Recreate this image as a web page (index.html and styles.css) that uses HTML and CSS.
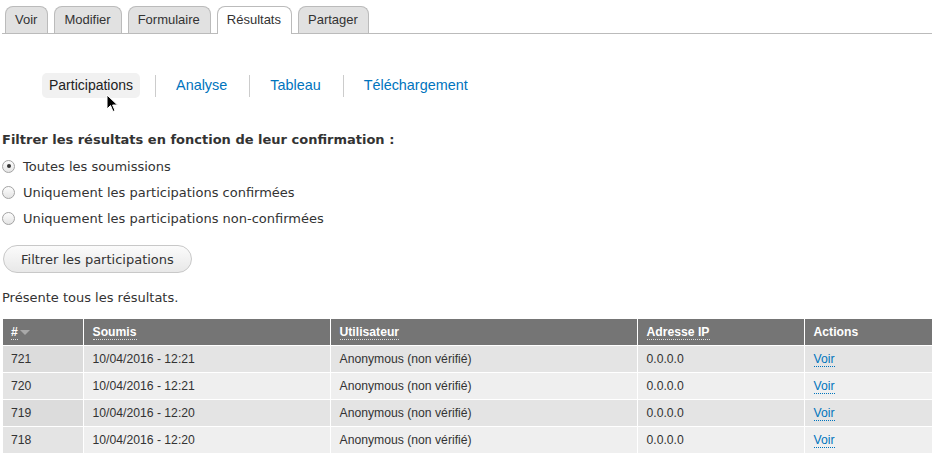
FILE: index.html
```html
<!DOCTYPE html>
<html lang="fr">
<head>
    <meta charset="UTF-8">
    <title>Résultats</title>
    <link rel="stylesheet" href="styles.css">
</head>
<body>
    <div class="page">
        <ul class="tabs">
            <li><a href="#">Voir</a></li>
            <li><a href="#">Modifier</a></li>
            <li><a href="#">Formulaire</a></li>
            <li class="active"><a href="#">Résultats</a></li>
            <li><a href="#">Partager</a></li>
        </ul>

        <ul class="subtabs">
            <li class="active">
                <a href="#">Participations</a>
                <svg class="cursor" width="13" height="20" viewBox="0 0 13 20">
                    <path d="M1 1 L1 15 L4.5 11.5 L7 17.5 L9 16.6 L6.6 11 L11.5 11 Z" fill="#000" stroke="#fff" stroke-width="1"/>
                </svg>
            </li>
            <li><a href="#">Analyse</a></li>
            <li><a href="#">Tableau</a></li>
            <li><a href="#">Téléchargement</a></li>
        </ul>

        <form class="filter">
            <div class="filter-title">Filtrer les résultats en fonction de leur confirmation :</div>
            <label class="radio"><input type="radio" name="status" checked> Toutes les soumissions</label>
            <label class="radio"><input type="radio" name="status"> Uniquement les participations confirmées</label>
            <label class="radio"><input type="radio" name="status"> Uniquement les participations non-confirmées</label>
            <button type="button" class="button">Filtrer les participations</button>
        </form>

        <p class="summary">Présente tous les résultats.</p>

        <table class="results">
            <colgroup>
                <col class="col-id">
                <col class="col-date">
                <col class="col-user">
                <col class="col-ip">
                <col class="col-actions">
            </colgroup>
            <thead>
                <tr>
                    <th><a href="#">#</a><span class="sort"></span></th>
                    <th><a href="#">Soumis</a></th>
                    <th><a href="#">Utilisateur</a></th>
                    <th><a href="#">Adresse IP</a></th>
                    <th>Actions</th>
                </tr>
            </thead>
            <tbody>
                <tr class="odd">
                    <td class="active">721</td>
                    <td>10/04/2016 - 12:21</td>
                    <td>Anonymous (non vérifié)</td>
                    <td>0.0.0.0</td>
                    <td><a href="#">Voir</a></td>
                </tr>
                <tr class="even">
                    <td class="active">720</td>
                    <td>10/04/2016 - 12:21</td>
                    <td>Anonymous (non vérifié)</td>
                    <td>0.0.0.0</td>
                    <td><a href="#">Voir</a></td>
                </tr>
                <tr class="odd">
                    <td class="active">719</td>
                    <td>10/04/2016 - 12:20</td>
                    <td>Anonymous (non vérifié)</td>
                    <td>0.0.0.0</td>
                    <td><a href="#">Voir</a></td>
                </tr>
                <tr class="even">
                    <td class="active">718</td>
                    <td>10/04/2016 - 12:20</td>
                    <td>Anonymous (non vérifié)</td>
                    <td>0.0.0.0</td>
                    <td><a href="#">Voir</a></td>
                </tr>
            </tbody>
        </table>
    </div>
</body>
</html>
```

FILE: styles.css
```css
body {
    margin: 0;
    background: #fff;
    color: #333;
    font-family: "DejaVu Sans", sans-serif;
    font-size: 13px;
}
.page {
    padding: 0 8px 0 2px;
}
a {
    text-decoration: none;
}

/* primary tabs */
.tabs {
    display: flex;
    gap: 6px;
    list-style: none;
    margin: 6px 0 0;
    padding: 0 0 0 3px;
    border-bottom: 1px solid #bbb;
}
.tabs li {
    margin-bottom: -1px;
}
.tabs a {
    display: block;
    padding: 5px 10px 5px 9px;
    line-height: 16px;
    font-family: "Liberation Sans", Arial, sans-serif;
    font-size: 13px;
    color: #333;
    background: #e1e1e1;
    border: 1px solid #bbb;
    border-bottom: none;
    border-radius: 8px 8px 0 0;
}
.tabs li.active a {
    background: #fff;
    padding-bottom: 6px;
}

/* secondary tabs */
.subtabs {
    display: flex;
    list-style: none;
    margin: 39px 0 0;
    padding: 0 0 0 26px;
}
.subtabs li {
    position: relative;
    display: flex;
    align-items: center;
    padding: 0 14px;
}
.subtabs li + li::before {
    content: "";
    position: absolute;
    left: 0;
    top: 2px;
    height: 22px;
    border-left: 1px solid #ccc;
}
.subtabs li + li {
    margin-left: 1px;
}
.subtabs a {
    display: block;
    padding: 4px 7px;
    line-height: 17px;
    font-family: "Liberation Sans", Arial, sans-serif;
    font-size: 14px;
    color: #0074bd;
    border-radius: 5px;
}
.subtabs li + li a {
    font-size: 14.4px;
}
.subtabs li.active a {
    color: #222;
    background: #f1f1f1;
}
.cursor {
    position: absolute;
    left: 78px;
    top: 21px;
}

/* filter form */
.filter {
    margin: 33px 0 0;
}
.filter-title {
    font-weight: bold;
    line-height: 18px;
}
.radio {
    display: flex;
    align-items: center;
    height: 26px;
    gap: 8px;
}
.filter-title + .radio {
    margin-top: 4px;
}
.radio input {
    appearance: none;
    width: 13px;
    height: 13px;
    margin: 0;
    border: 1px solid #a3a3a3;
    border-radius: 50%;
    background: linear-gradient(#fdfdfd, #e4e4e4);
    display: grid;
    place-items: center;
}
.radio input:checked::after {
    content: "";
    width: 4px;
    height: 4px;
    border-radius: 50%;
    background: #333;
}
.button {
    display: block;
    margin: 14px 0 0 1px;
    height: 28px;
    padding: 0 17px;
    font-family: "DejaVu Sans", sans-serif;
    font-size: 13px;
    color: #333;
    background: linear-gradient(#fbfbfb, #e8e8e8);
    border: 1px solid #c8c8c8;
    border-radius: 14px;
}

.summary {
    margin: 16px 0 12px;
    line-height: 18px;
}

/* results table */
.results {
    width: 929px;
    margin-left: 1px;
    table-layout: fixed;
    border-collapse: collapse;
    font-family: "Liberation Sans", Arial, sans-serif;
    font-size: 12.2px;
}
.col-id { width: 80px; }
.col-date { width: 247px; }
.col-user { width: 307px; }
.col-ip { width: 167px; }
.col-actions { width: 128px; }
.results th {
    height: 26px;
    padding: 0 8px 0 9px;
    text-align: left;
    color: #fff;
    font-weight: bold;
    background: #757575;
    border-left: 1px solid #fff;
    border-bottom: 1px solid #fff;
}
.results th:first-child,
.results td:first-child {
    border-left: none;
    padding-left: 8px;
}
.results th a {
    color: #fff;
    border-bottom: 1px dotted #ddd;
}
.results .sort {
    display: inline-block;
    margin-left: 2px;
    vertical-align: middle;
    border-left: 5px solid transparent;
    border-right: 5px solid transparent;
    border-top: 5px solid #a9a9a9;
}
.results td {
    height: 26px;
    padding: 0 8px 0 9px;
    border-left: 1px solid #fff;
    border-bottom: 1px solid #fff;
}
.results tr.odd td {
    background: #e4e4e4;
}
.results tr.even td {
    background: #efefef;
}
.results tr.odd td.active {
    background: #dcdcdc;
}
.results tr.even td.active {
    background: #e4e4e4;
}
.results td a {
    color: #0074bd;
    border-bottom: 1px dotted #0074bd;
}
```
